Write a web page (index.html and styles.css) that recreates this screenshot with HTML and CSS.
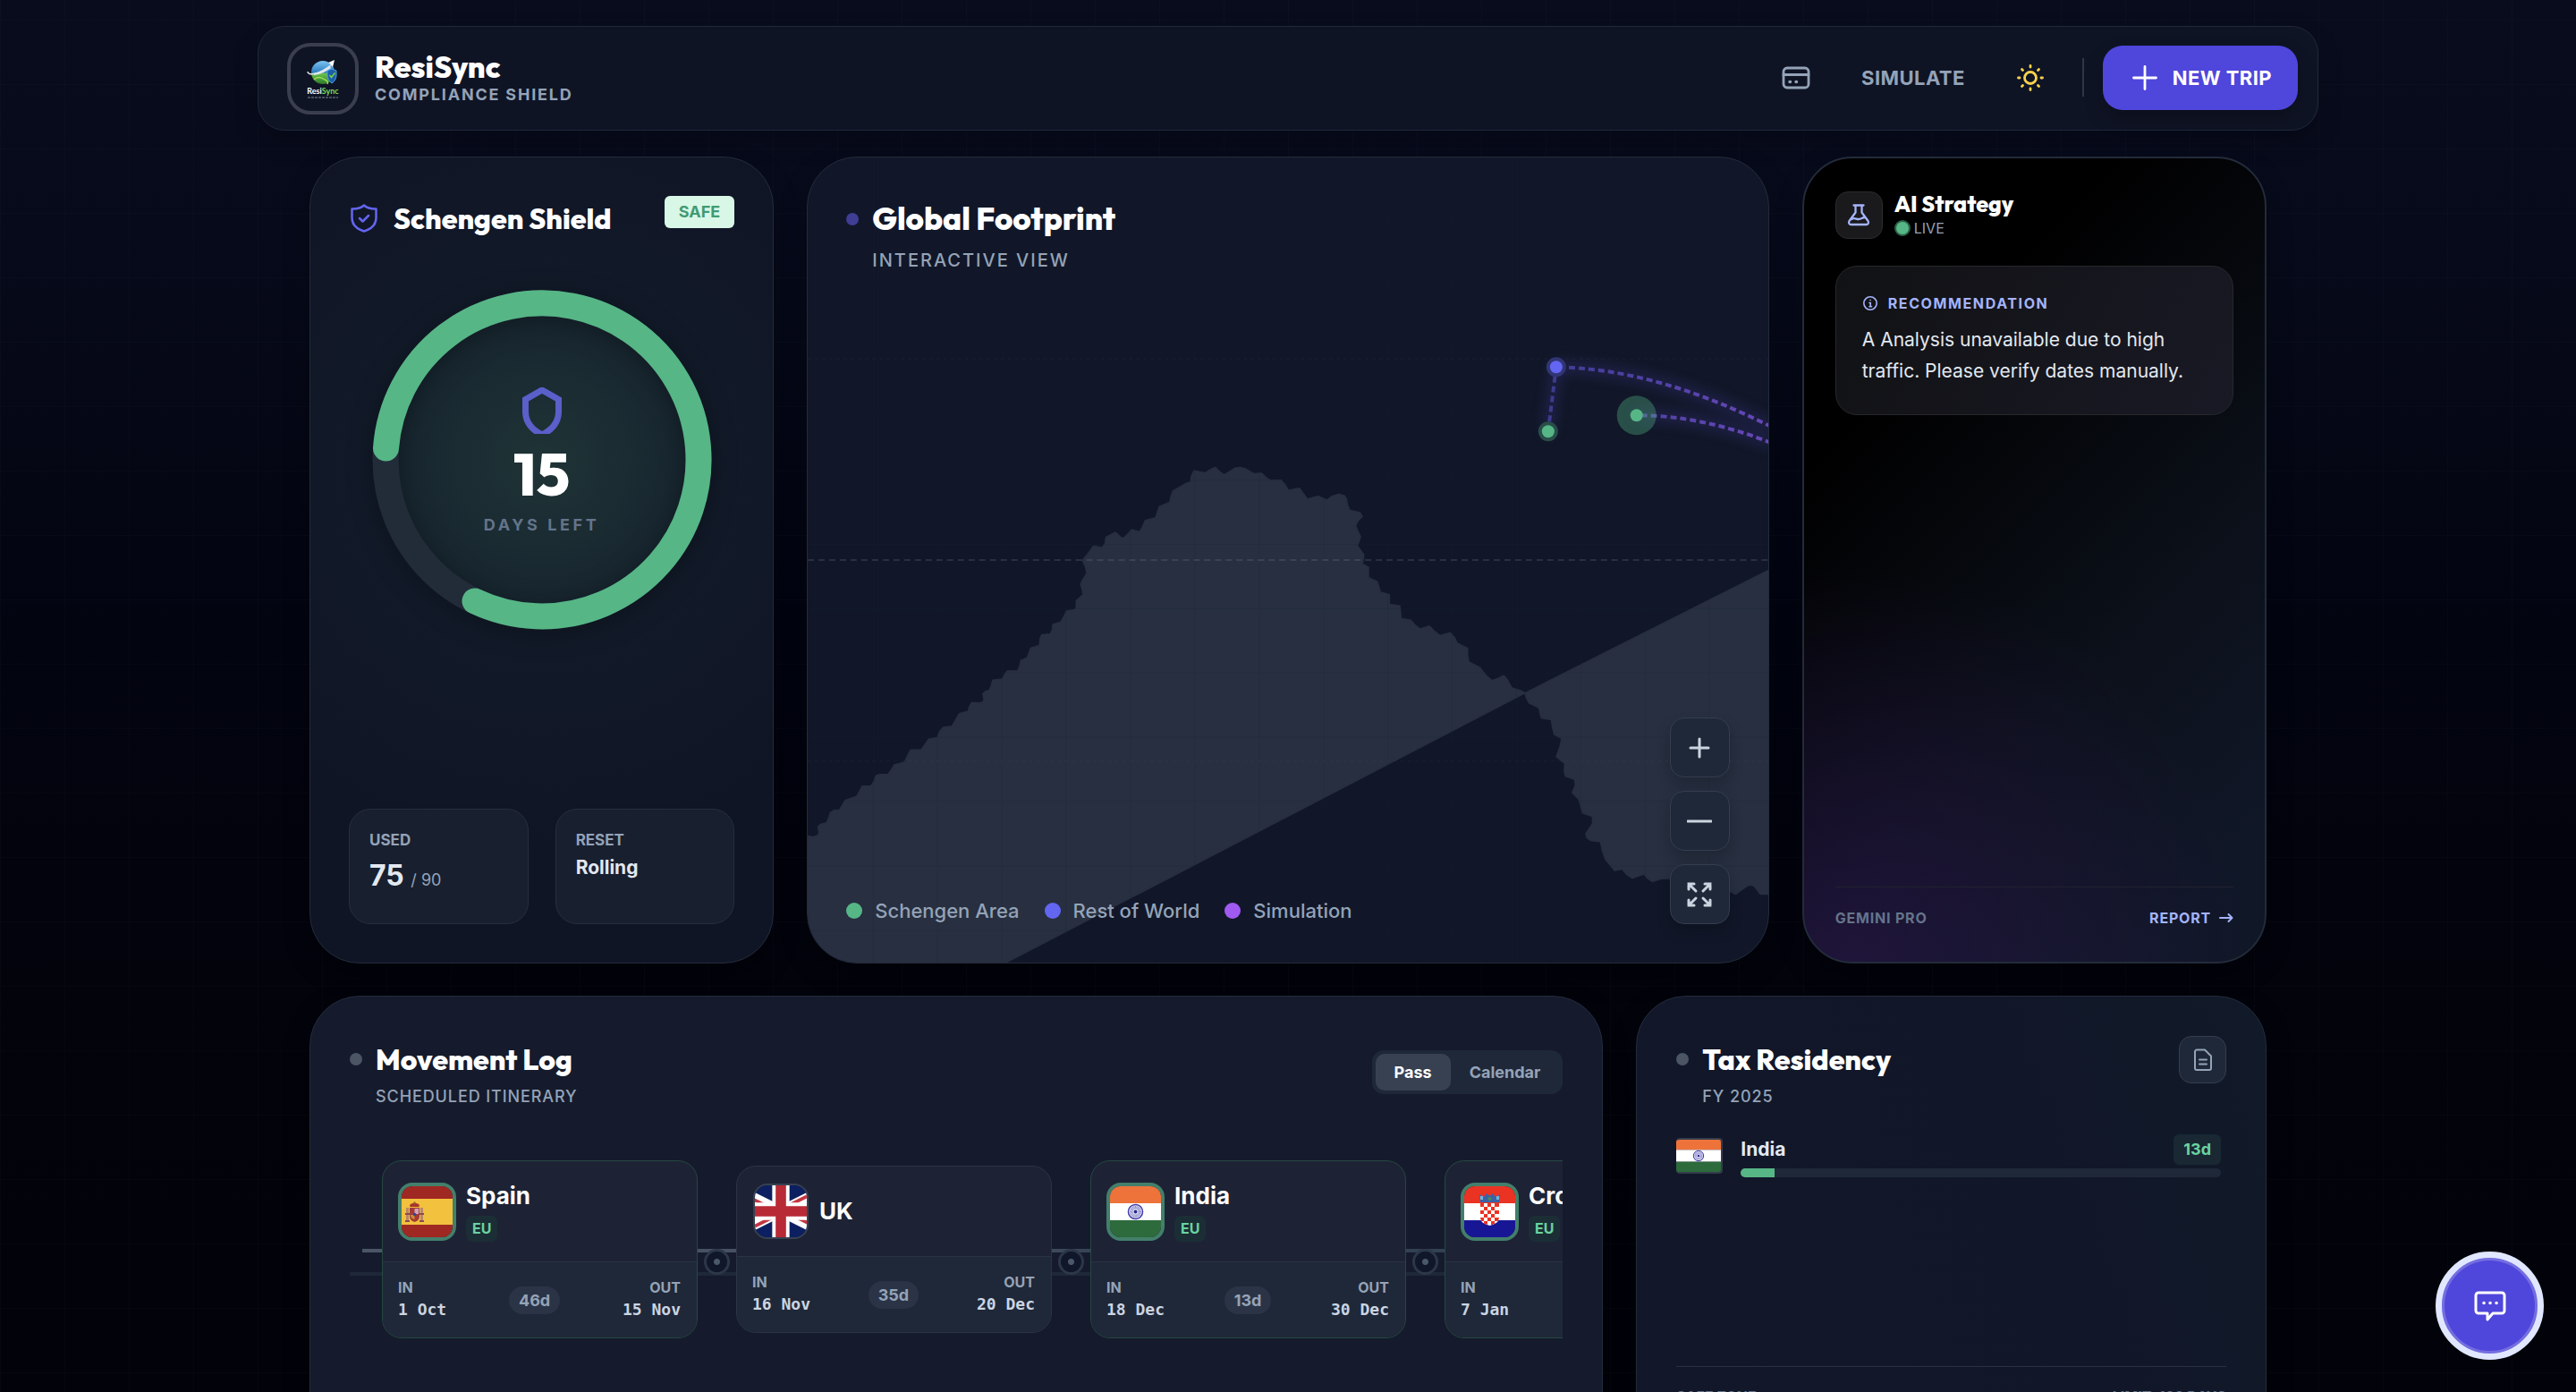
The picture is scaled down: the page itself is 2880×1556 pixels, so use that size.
FILE: index.html
```html
<!DOCTYPE html>
<html lang="en">
<head>
<meta charset="utf-8">
<meta name="viewport" content="width=device-width, initial-scale=1">
<title>ResiSync – Compliance Shield</title>
<link rel="stylesheet" href="styles.css">
</head>
<body>
<svg class="defs" aria-hidden="true">
  <symbol id="flag-india" viewBox="0 0 60 48" preserveAspectRatio="xMidYMid slice">
    <rect width="60" height="16" fill="#ee733b"/><rect y="16" width="60" height="16" fill="#fff"/><rect y="32" width="60" height="16" fill="#2d6a3c"/>
    <circle cx="30" cy="24" r="6.8" fill="#e4e4f2" stroke="#3d3aa8" stroke-width="1.2"/>
    <circle cx="30" cy="24" r="4" fill="none" stroke="#8886cc" stroke-width="3" stroke-dasharray=".7 .5"/><circle cx="30" cy="24" r="1.6" fill="#2a2890"/>
  </symbol>
  <symbol id="flag-spain" viewBox="0 0 57 57">
    <rect width="57" height="57" fill="#9f2823"/><rect y="14" width="57" height="29" fill="#f2c13e"/>
    <path d="M5 24h3v16H5zM21 24h3v16h-3z" fill="#b9876a"/><path d="M4 30h5v2H4zM20 30h5v2h-5zM4 38h5v2H4zM20 38h5v2h-5z" fill="#8c4b52"/>
    <path d="M9 24h11v9c0 4-2 6-5.500 7C11 39 9 37 9 33z" fill="#a53a35"/><path d="M14.500 25H19v6h-4.500z" fill="#cfa3b8"/><path d="M10 32h4.500v5c-3-.5-4.500-2-4.500-5z" fill="#c98a35"/><circle cx="14.500" cy="31.500" r="1.800" fill="#34478f"/>
    <path d="M9.500 23c-1-3 1-4 5-4s6 1 5 4z" fill="#a7352c"/><circle cx="14.500" cy="18.500" r="1.200" fill="#9a6a2c"/>
  </symbol>
  <symbol id="flag-uk" viewBox="0 0 60 30" preserveAspectRatio="xMidYMid slice">
    <clipPath id="uk-tri"><path d="M30 15h30v15zv15H0zH0V0zV0h30z"/></clipPath>
    <rect width="60" height="30" fill="#0c1f60"/><path d="M0 0l60 30M60 0L0 30" stroke="#fff" stroke-width="6"/>
    <path d="M0 0l60 30M60 0L0 30" clip-path="url(#uk-tri)" stroke="#c43540" stroke-width="4"/>
    <path d="M30 0v30M0 15h60" stroke="#fff" stroke-width="10"/><path d="M30 0v30M0 15h60" stroke="#b82a35" stroke-width="6"/>
  </symbol>
  <symbol id="flag-croatia" viewBox="0 0 57 57">
    <rect width="57" height="19" fill="#ea3323"/><rect y="19" width="57" height="19" fill="#fff"/><rect y="38" width="57" height="19" fill="#171796"/>
    <path d="M18 19h21v16c0 5-4 7-10.500 9C22 42 18 40 18 35z" fill="#fff"/>
    <path d="M18 19h4v4h-4zM26 19h4v4h-4zM34 19h5v4h-5zM22 23h4v4h-4zM30 23h4v4h-4zM18 27h4v4h-4zM26 27h4v4h-4zM34 27h5v4h-5zM22 31h4v4h-4zM30 31h4v4h-4zM18 35h4v4h-3zM26 35h4v4h-4zM34 35h5l-1 4h-4zM22 39h4v4l-4-1.500zM30 39h4v3l-4 1.500z" fill="#ea3323"/>
    <path d="M17 9l5 3 3-4 3.500 3L32 8l3 4 5-3-1 9H18z" fill="#3a62a8"/><path d="M18 11h3v4h-3zM36 11h3v4h-3z" fill="#6fb7dd"/><circle cx="28.500" cy="14" r="2" fill="#4a8a5a"/>
  </symbol>
  <linearGradient id="route-grad" gradientUnits="userSpaceOnUse" x1="820" y1="0" x2="1075" y2="0"><stop offset="0" stop-color="#3d3c93"/><stop offset="1" stop-color="#6747b8"/></linearGradient>
  <linearGradient id="globe" x1="0" y1="0" x2="0" y2="1"><stop offset="0" stop-color="#7cc4f2"/><stop offset=".5" stop-color="#2f7fc0"/><stop offset=".55" stop-color="#6cc24a"/><stop offset="1" stop-color="#2c7a2c"/></linearGradient>
</svg>

<header class="topbar">
  <a class="brand" href="#">
    <span class="brand-mark">
      <svg width="40" height="46" viewBox="0 0 40 46" aria-hidden="true">
        <circle cx="20" cy="16" r="13" fill="url(#globe)"/>
        <path d="M9 17c6-1 14-4 19-8l1 2c-5 4-12 7-19 8z" fill="#dfe9f2"/>
        <path d="M3 15c0 5 12 4 27-8" fill="none" stroke="#dfe6ee" stroke-width="1.500"/><path d="M26 5l7-3-2 8-2-3z" fill="#fff"/>
        <path d="M10 24c4-4 9-2 12 0 3 1 4 3 3 5" fill="none" stroke="#9be05c" stroke-width="1.500"/>
        <path d="M25 14l5-2 5 2v5c0 4-2 7-5 9-3-2-5-5-5-9z" fill="#1d5ea8" stroke="#4ba3e8" stroke-width="1"/><path d="M27.500 19l2 2.500 4-5" fill="none" stroke="#7ad04c" stroke-width="1.500"/>
        <text x="20" y="40" text-anchor="middle" font-family="Lato, sans-serif" font-weight="700" font-size="9" fill="#fff">Resi<tspan fill="#7ed957">Sync</tspan></text>
        <path d="M3 44h34" stroke="#7f8796" stroke-width="1" stroke-dasharray="3 1"/>
      </svg>
    </span>
    <span class="brand-text"><strong class="brand-name">ResiSync</strong><span class="brand-sub">COMPLIANCE SHIELD</span></span>
  </a>
  <nav class="nav">
    <button class="icon-btn" aria-label="Cards"><svg width="32" height="32" viewBox="0 0 32 32" fill="none" stroke="currentColor" stroke-width="2.800" stroke-linecap="round"><rect x="2" y="5" width="28" height="22" rx="4"/><path d="M2 12.500h28"/><path d="M9 20.500h.5M16 20.500h.5" stroke-width="3.500"/></svg></button>
    <button class="text-btn">SIMULATE</button>
    <button class="icon-btn sun" aria-label="Toggle theme"><svg width="32" height="32" viewBox="0 0 32 32" fill="none" stroke="currentColor" stroke-width="2.800" stroke-linecap="round"><circle cx="16" cy="16" r="6.500"/><path d="M16 2.500v1.500M16 28v1.500M2.500 16h1.500M28 16h1.500M6.500 6.500l1 1M24.500 24.500l1 1M6.500 25.500l1-1M24.500 7.500l1-1"/></svg></button>
    <span class="nav-rule"></span>
    <button class="primary-btn"><svg width="28" height="28" viewBox="0 0 28 28" fill="none" stroke="currentColor" stroke-width="2.800" stroke-linecap="round"><path d="M14 1.500v25M1.500 14h25"/></svg>NEW TRIP</button>
  </nav>
</header>

<main class="board">
  <section class="card shield-card">
    <div class="shield-head">
      <svg width="34" height="34" viewBox="0 0 34 34" fill="none" stroke="#6366f1" stroke-width="2.500" stroke-linecap="round" stroke-linejoin="round"><path d="M17 2.500c3.500 3 8 4.200 13.500 4v10c0 7.500-5.500 12.500-13.500 15-8-2.500-13.500-7.500-13.500-15v-10c5.500.2 10-1 13.500-4z"/><path d="M12 17l3.500 3.500L22 14"/></svg>
      <h2 class="title">Schengen Shield</h2>
      <span class="badge-safe">SAFE</span>
    </div>
    <div class="ring">
      <svg class="ring-svg" viewBox="0 0 380 380" fill="none" stroke-width="29"><circle cx="190" cy="190" r="175" stroke="#222c39"/><path d="M15.500 177A175 175 0 1 1 115 348" stroke="#56b686" stroke-linecap="round"/></svg>
      <div class="ring-body">
        <svg width="44" height="52" viewBox="0 0 44 52" fill="none" stroke="#5a5fc9" stroke-width="7"><path d="M22 3L40.500 13.500V27C40.500 40 32 48 22 53 12 48 3.500 40 3.500 27V13.500z"/></svg>
        <strong class="ring-num">15</strong>
        <span class="ring-label">DAYS LEFT</span>
      </div>
    </div>
    <dl class="stats">
      <div class="stat"><dt>USED</dt><dd class="stat-big">75 <small>/ 90</small></dd></div>
      <div class="stat"><dt>RESET</dt><dd>Rolling</dd></div>
    </dl>
  </section>

  <section class="card map-card">
    <svg class="map" viewBox="-1 -1 1075 902" preserveAspectRatio="xMidYMid slice" aria-hidden="true">
      <g transform="translate(-3 324) scale(.6888 .3827)" fill="#272f40" stroke="#272f40" stroke-width="3" stroke-linejoin="round">
        <path d="M0 1135L12 1139 20 1134 22 1125 20 1110 24 1102 34 1097 38 1082 40 1068 46 1061 55 1060 60 1045 64 1032 83 1020 88 1004 92 990 106 990 112 974 114 960 120 956 134 956 140 940 144 928 161 920 166 900 171 884 188 884 194 868 200 853 214 848 218 830 224 818 238 815 244 796 250 778 264 771 266 758 270 746 286 747 290 738 288 720 292 713 299 709 302 694 304 680 320 677 324 662 328 653 345 653 348 638 350 622 360 615 363 600 366 586 380 578 381 560 384 547 398 545 401 533 402 517 415 510 420 494 424 478 438 474 440 465 440 448 451 430 450 418 447 400 450 388 457 368 455 350 450 330 458 312 468 288 482 293 487 280 488 262 503 248 510 260 516 266 523 254 530 240 543 247 548 230 552 213 569 205 572 188 575 172 592 160 594 142 597 127 618 105 626 100 627 84 631 68 650 74 656 66 665 58 672 70 680 80 690 69 698 60 705 58 713 61 727 76 740 75 748 88 755 96 772 95 778 108 784 125 802 119 808 134 815 151 832 142 847 154 856 142 866 136 875 141 878 150 880 168 883 183 900 190 904 202 897 215 893 228 896 242 901 260 899 274 896 287 906 312 906 325 904 340 914 350 914 365 914 380 928 392 931 408 933 422 948 430 948 445 948 458 965 463 966 480 967 500 983 505 990 520 998 531 1013 522 1022 538 1030 550 1047 542 1054 556 1058 572 1075 587 1075 605 1077 627 1095 643 1105 666 1115 682 1125 675 1134 667 1140 680 1147 703 1160 710 1169 718L322 1510H-3V1135z"/>
        <path d="M1169 718L1172 735 1176 748 1192 762 1194 780 1196 792 1212 797 1214 820 1217 840 1229 852 1226 875 1220 905 1234 925 1233 945 1235 962 1250 972 1251 988 1246 1010 1257 1030 1260 1050 1263 1070 1279 1080 1279 1100 1268 1130 1270 1142 1276 1150 1292 1154 1295 1180 1300 1205 1315 1238 1327 1233 1335 1250 1343 1260 1363 1248 1368 1260 1376 1270 1390 1262 1403 1261H1480L1501 1297 1511 1307 1524 1290 1530 1282 1536 1280 1542 1284 1552 1307H1570V354z"/>
      </g>
      <g stroke="#1d2536" stroke-opacity=".18"><path d="M72.500 0v902M144.500 0v902M216.500 0v902M288.500 0v902M360.500 0v902M432.500 0v902M504.500 0v902M576.500 0v902M648.500 0v902M720.500 0v902M792.500 0v902M864.500 0v902M936.500 0v902M1008.500 0v902M0 72.500h1075M0 144.500h1075M0 216.500h1075M0 288.500h1075M0 360.500h1075M0 432.500h1075M0 504.500h1075M0 576.500h1075M0 648.500h1075M0 720.500h1075M0 792.500h1075M0 864.500h1075"/></g>
      <path d="M-1 450h1076" stroke="#94a3b8" stroke-opacity=".18" stroke-width="2" stroke-dasharray="7 5"/>
      <path d="M-1 225h1076M-1 675h1076" stroke="#94a3b8" stroke-opacity=".04" stroke-width="2" stroke-dasharray="4 4"/>
      <g class="routes" fill="none" stroke="url(#route-grad)" stroke-width="4" stroke-dasharray="7 4"><path d="M1078 301Q950 236 837 234"/><path d="M1078 319Q1000 288 927 288"/><path d="M828 306L837 234" stroke="#3c3b8c"/></g>
      <circle cx="837" cy="234" r="11" fill="#313573"/><circle cx="837" cy="234" r="7" fill="#6366f1"/>
      <circle cx="828" cy="306" r="11" fill="#294d48"/><circle cx="828" cy="306" r="7" fill="#56b686"/>
      <circle cx="927" cy="288" r="22" fill="#56b686" fill-opacity=".35"/><circle cx="927" cy="288" r="7" fill="#56b686"/>
    </svg>
    <div class="heading map-heading">
      <span class="dot dot-indigo"></span>
      <div><h2 class="title">Global Footprint</h2><p class="subtitle">INTERACTIVE VIEW</p></div>
    </div>
    <div class="map-foot">
      <ul class="legend"><li class="l-green">Schengen Area</li><li class="l-indigo">Rest of World</li><li class="l-purple">Simulation</li></ul>
      <div class="zoom">
        <button aria-label="Zoom in"><svg width="28" height="28" viewBox="0 0 28 28"><path d="M14 4v20M4 14h20"/></svg></button>
        <button aria-label="Zoom out"><svg width="28" height="28" viewBox="0 0 28 28"><path d="M1 14h26"/></svg></button>
        <button aria-label="Fit map"><svg width="30" height="30" viewBox="0 0 30 30"><path d="M3 9V3h6M3 3l8 8M21 3h6v6M27 3l-8 8M3 21v6h6M3 27l8-8M21 27h6v-6M27 27l-8-8"/></svg></button>
      </div>
    </div>
  </section>

  <section class="card ai-card">
    <div class="ai-head">
      <span class="ai-icon"><svg width="28" height="28" viewBox="0 0 28 28" fill="none" stroke="#a5b4fc" stroke-width="2.300" stroke-linecap="round" stroke-linejoin="round"><path d="M8.500 3.500h11M10.500 3.500v8L3.500 21c-1.200 2 0 4 2 4h17c2 0 3.200-2 2-4l-7-9.500v-8"/><path d="M6 19c3-2 5 0 8 0s4-2 7-2"/></svg></span>
      <div><h2 class="ai-title">AI Strategy</h2><p class="live">LIVE</p></div>
    </div>
    <div class="rec">
      <h3><svg width="18" height="18" viewBox="0 0 18 18" fill="none" stroke="currentColor" stroke-width="1.600" stroke-linecap="round"><circle cx="9" cy="9" r="7.200"/><path d="M8 8.500h1.200v4M8 12.700h2.500M9 5.500h.1"/></svg>RECOMMENDATION</h3>
      <p>A Analysis unavailable due to high traffic. Please verify dates manually.</p>
    </div>
    <div class="ai-foot"><span>GEMINI PRO</span><a href="#">REPORT <svg width="16" height="12" viewBox="0 0 16 12" fill="none" stroke="currentColor" stroke-width="2" stroke-linecap="round" stroke-linejoin="round"><path d="M1 6h13.500M10.500 2l4 4-4 4"/></svg></a></div>
  </section>

  <section class="card log-card">
    <div class="heading">
      <span class="dot"></span>
      <div><h2 class="title">Movement Log</h2><p class="subtitle">SCHEDULED ITINERARY</p></div>
      <div class="toggle"><button class="on">Pass</button><button>Calendar</button></div>
    </div>
    <ol class="timeline">
      <li><article class="trip eu"><div class="trip-top"><svg class="flag"><use href="#flag-spain"/></svg><div><h3>Spain</h3><span class="eu-tag">EU</span></div></div><div class="trip-dates"><p><span>IN</span><time>1 Oct</time></p><b>46d</b><p><span>OUT</span><time>15 Nov</time></p></div></article><i class="node"></i></li>
      <li><article class="trip"><div class="trip-top"><svg class="flag"><use href="#flag-uk"/></svg><div><h3>UK</h3></div></div><div class="trip-dates"><p><span>IN</span><time>16 Nov</time></p><b>35d</b><p><span>OUT</span><time>20 Dec</time></p></div></article><i class="node"></i></li>
      <li><article class="trip eu"><div class="trip-top"><svg class="flag"><use href="#flag-india"/></svg><div><h3>India</h3><span class="eu-tag">EU</span></div></div><div class="trip-dates"><p><span>IN</span><time>18 Dec</time></p><b>13d</b><p><span>OUT</span><time>30 Dec</time></p></div></article><i class="node"></i></li>
      <li><article class="trip eu"><div class="trip-top"><svg class="flag"><use href="#flag-croatia"/></svg><div><h3>Croatia</h3><span class="eu-tag">EU</span></div></div><div class="trip-dates"><p><span>IN</span><time>7 Jan</time></p></div></article></li>
    </ol>
  </section>

  <section class="card tax-card">
    <div class="heading">
      <span class="dot"></span>
      <div><h2 class="title">Tax Residency</h2><p class="subtitle">FY 2025</p></div>
      <button class="doc-btn" aria-label="Tax report"><svg width="26" height="26" viewBox="0 0 26 26" fill="none" stroke="currentColor" stroke-width="2" stroke-linecap="round" stroke-linejoin="round"><path d="M6 1.500h9l7 7V22a2 2 0 0 1-2 2H6a2 2 0 0 1-2-2V3.500a2 2 0 0 1 2-2zM9 12.500h8M9 17.500h8"/></svg></button>
    </div>
    <ul class="tax-list">
      <li><svg class="tax-flag"><use href="#flag-india"/></svg><div class="tax-row"><div class="tax-line"><span>India</span><b>13d</b></div><div class="bar"><span style="width:7.1%"></span></div></div></li>
    </ul>
    <div class="tax-foot"><span>SAFE ZONE</span><span>LIMIT: 183 DAYS</span></div>
  </section>
</main>

<button class="chat" aria-label="Open chat"><svg width="38" height="38" viewBox="0 0 38 38" fill="none" stroke="#fff" stroke-width="3" stroke-linejoin="round" stroke-linecap="round"><path d="M6 4h26a3 3 0 0 1 3 3v17a3 3 0 0 1-3 3H22l-6 7v-7H6a3 3 0 0 1-3-3V7a3 3 0 0 1 3-3z"/><path d="M12 15.500h.1M19 15.500h.1M26 15.500h.1" stroke-width="3.500"/></svg></button>
</body>
</html>
```
FILE: styles.css
```css
* { box-sizing: border-box; margin: 0; padding: 0; }
html { scrollbar-width: none; background: #020309; }
body {
  min-height: 100vh;
  padding: 29px 32px 60px;
  font-family: Inter, "Liberation Sans", sans-serif;
  font-size: 18px;
  color: #fff;
  background:
    repeating-linear-gradient(90deg, rgba(255,255,255,.014) 0 1px, transparent 1px 72px),
    repeating-linear-gradient(0deg, rgba(255,255,255,.014) 0 1px, transparent 1px 72px),
    linear-gradient(#090c1d 0, #070a1a 260px, #020410 700px, #02030b 1100px, #020309 100%);
}
button { font: inherit; color: inherit; border: 0; background: none; cursor: pointer; }
a { color: inherit; text-decoration: none; }
ul, ol { list-style: none; }
svg { display: block; flex: none; }
.defs { position: absolute; width: 0; height: 0; }

.topbar {
  display: flex; align-items: center; justify-content: space-between;
  max-width: 2304px; min-height: 117px; margin: 0 auto 29px; padding: 0 22px 0 32px;
  border: 1px solid #20273a; border-radius: 30px;
  background: #0f1425; box-shadow: 0 12px 28px rgba(0,0,0,.2);
}
.brand { display: flex; align-items: center; gap: 18px; }
.brand-mark { display: grid; place-items: center; width: 80px; height: 80px; border: 4px solid #3a3e4e; border-radius: 26px; }
.brand-text { display: flex; flex-direction: column; padding-bottom: 4px; }
.brand-name, .title, .ai-title, .ring-num { font-family: Outfit, Lato, sans-serif; font-weight: 800; }
.brand-name { font-size: 34px; line-height: 40px; }
.brand-sub { font-size: 18px; line-height: 22px; font-weight: 700; letter-spacing: .1em; color: #94a3b8; }
.nav { display: flex; align-items: center; padding-bottom: 2px; }
.icon-btn { display: grid; place-items: center; width: 72px; height: 72px; color: #94a3b8; }
.sun { color: #fcd34d; margin-right: 22px; }
.text-btn { padding: 0 37px; font-size: 22px; font-weight: 700; letter-spacing: .02em; color: #94a3b8; line-height: 40px; }
.nav-rule { width: 2px; height: 43px; margin-right: 21px; background: #2d3748; }
.primary-btn {
  display: flex; align-items: center; gap: 17px; height: 72px; padding: 0 29px 0 33px;
  font-size: 22px; font-weight: 700; letter-spacing: .02em; border-radius: 22px; background: #4f46dc; box-shadow: 0 10px 20px rgba(0,0,0,.25);
}

.board { display: grid; grid-template-columns: repeat(12, minmax(0, 1fr)); gap: 36px 37px; max-width: 2188px; margin: 0 auto; }
.card { position: relative; display: flex; flex-direction: column; border: 1px solid #232b3b; border-radius: 56px; overflow: hidden; box-shadow: 0 12px 30px rgba(0,0,0,.25); }
.shield-card, .map-card, .ai-card { min-height: 902px; }
.title { font-size: 32px; line-height: 52px; white-space: nowrap; }
.subtitle { margin-top: 4px; font-size: 18px; line-height: 24px; font-weight: 500; letter-spacing: .05em; color: #94a3b8; }
.heading { display: flex; }
.dot { flex: none; width: 14px; height: 14px; margin: 19px 15px 0 0; border-radius: 50%; background: #4b5563; }
.dot-indigo { background: #3f3d94; }

.shield-card { grid-column: span 3; padding: 43px; background: radial-gradient(circle 420px at 50% 350px, #142029, #111828 60%, #101525); }
.shield-head { display: flex; gap: 16px; height: 50px; align-items: center; }
.badge-safe { align-self: flex-start; margin-left: auto; padding: 0 16px; font-weight: 700; line-height: 36px; border-radius: 6px; color: #429a72; background: #d9f7e6; }
.ring { display: grid; place-items: center; margin: 55px auto 0; width: 380px; height: 380px; border-radius: 50%; background: radial-gradient(circle, #1f3436, #17252f 62%, transparent 70%); }
.ring-svg { grid-area: 1 / 1; width: 380px; height: 380px; filter: drop-shadow(0 4px 14px rgba(0,0,0,.3)); }
.ring-body { grid-area: 1 / 1; position: relative; display: flex; flex-direction: column; align-items: center; padding-top: 4px; }
.ring-num { margin-top: 11px; font-size: 66px; line-height: 68px; }
.ring-label { margin-top: 11px; font-size: 18px; font-weight: 700; line-height: 24px; letter-spacing: .2em; color: #64748b; }
.stats { display: grid; grid-template-columns: 1fr 1fr; gap: 30px; margin-top: auto; }
.stat { min-height: 129px; padding: 22px; border: 1px solid #262e3d; border-radius: 24px; background: #181f2f; }
.stat dt { font-size: 17px; font-weight: 700; line-height: 24px; color: #94a3b8; }
.stat dd { margin-top: 4px; font-size: 21px; font-weight: 700; line-height: 30px; color: #e2e8f0; }
.stat .stat-big { font-size: 32px; line-height: 48px; }
.stat small { font-size: 18px; font-weight: 400; color: #94a3b8; }

.map-card { grid-column: span 6; padding: 43px; background: #111728; justify-content: space-between; }
.map { position: absolute; inset: 0; width: 100%; height: 100%; }
.routes { filter: drop-shadow(0 0 8px #5b4bd0); }
.map-heading, .map-foot { position: relative; }
.map-heading .title { font-size: 35px; line-height: 50px; }
.map-heading .subtitle { margin-top: 10px; font-size: 20px; letter-spacing: .1em; }
.map-foot { display: flex; justify-content: space-between; align-items: flex-end; }
.legend { display: flex; gap: 28px; color: #94a3b8; font-size: 22px; font-weight: 500; line-height: 30px; }
.legend li { display: flex; align-items: center; gap: 14px; }
.legend li::before { content: ""; width: 18px; height: 18px; border-radius: 50%; background: currentColor; }
.l-green::before { color: #56b686; }
.l-indigo::before { color: #6366f1; }
.l-purple::before { color: #a05af0; }
.zoom { display: grid; gap: 15px; }
.zoom button { display: grid; place-items: center; width: 67px; height: 67px; border: 1px solid #343e4f; border-radius: 16px; background: #1f2838; box-shadow: 0 8px 16px rgba(0,0,0,.2); }
.zoom svg { fill: none; stroke: #cbd5e1; stroke-width: 3; stroke-linecap: round; }

.ai-card { grid-column: span 3; padding: 36px 35px 36px; border-width: 2px; background: radial-gradient(circle 440px at 10% 100%, rgba(50,24,88,.5), transparent), linear-gradient(135deg, #000 25%, #0b1019 62%, #101727 90%); }
.ai-head { display: flex; gap: 13px; align-items: center; }
.ai-icon { display: grid; place-items: center; width: 53px; height: 53px; border: 1px solid #2c2c30; border-radius: 14px; background: #1a1a1c; }
.ai-title { font-size: 25px; line-height: 30px; }
.live { display: flex; align-items: center; gap: 4px; font-size: 16px; line-height: 24px; color: #94a3b8; }
.live::before { content: ""; width: 14px; height: 14px; border: 2px solid #2b6248; border-radius: 50%; background: #56b686; }
.rec { margin-top: 30px; padding: 29px 29px 31px; border: 1px solid #26282c; border-radius: 24px; background: linear-gradient(120deg, #111214, #191925); }
.rec h3 { display: flex; gap: 11px; align-items: center; font-size: 16px; line-height: 24px; font-weight: 700; letter-spacing: .1em; color: #a5b4fc; }
.rec p { margin-top: 11px; font-size: 21px; line-height: 35px; font-weight: 400; color: #e2e8f0; }
.ai-foot { display: flex; justify-content: space-between; margin-top: auto; padding-top: 21px; border-top: 1px solid #20222f; font-size: 16px; line-height: 26px; font-weight: 700; letter-spacing: .05em; color: #64748b; }
.ai-foot a { display: flex; align-items: center; gap: 9px; color: #a5b4fc; }

.log-card { grid-column: span 8; padding: 44px; background: #151b2c; min-height: 500px; }
.toggle { display: flex; height: 49px; margin: 16px 0 0 auto; padding: 4px; border-radius: 13px; background: #1f2838; }
.toggle button { padding: 0 21px; border-radius: 10px; font-size: 18px; font-weight: 700; color: #94a3b8; }
.toggle .on { color: #fff; background: #374151; }
.timeline { position: relative; display: flex; align-items: center; margin-top: 59px; padding-left: 36px; overflow: hidden; }
.timeline::before { content: ""; position: absolute; left: 14px; right: 0; top: 99px; height: 4px; background: linear-gradient(90deg, #4b5568, #434e60 55%, #334155 62%); }
.timeline::after { content: ""; position: absolute; left: 0; right: 0; top: 125px; height: 4px; background: #1f2838; }
.timeline li { position: relative; z-index: 1; display: flex; align-items: center; flex: none; }
.node { flex: none; width: 29px; height: 29px; margin: 28px 7px 0; border: 3px solid #2c3749; border-radius: 50%; background: radial-gradient(circle, #4b5869 0 3px, #10172a 4px); }
.trip { width: 353px; border: 1px solid #2b3446; border-radius: 22px; background: #1d2335; overflow: hidden; }
.trip.eu { border-color: #254841; }
.trip-top { display: flex; align-items: center; gap: 12px; height: 101px; padding: 0 18px; border-bottom: 1px solid #2a3243; }
.trip.eu .trip-top { gap: 11px; height: 113px; padding: 0 17px; }
.flag { width: 62px; height: 62px; border: 2px solid #374151; border-radius: 16px; overflow: hidden; }
.eu .flag { width: 65px; height: 65px; border: 4px solid #437f6b; }
.trip h3 { font-size: 26px; line-height: 34px; font-weight: 700; }
.eu-tag { display: inline-block; margin-top: 5px; padding: 0 7px; font-size: 16px; line-height: 29px; font-weight: 700; border-radius: 7px; color: #6ad3a0; background: #1b2e35; vertical-align: top; }
.trip-dates { display: flex; align-items: center; justify-content: space-between; height: 84px; padding: 0 18px 0 17px; background: #1f2838; }
.trip-dates p { display: flex; flex-direction: column; }
.trip-dates p:last-child:not(:first-child) { text-align: right; }
.trip-dates span { font-size: 16px; line-height: 22px; font-weight: 700; color: #94a3b8; }
.trip-dates time { font-family: "DejaVu Sans Mono", monospace; font-size: 18px; line-height: 28px; font-weight: 700; color: #cbd5e1; }
.trip-dates b { padding: 0 11px; font-size: 18px; font-weight: 700; line-height: 31px; border-radius: 16px; color: #94a3b8; background: #2b3446; }

.tax-card { grid-column: span 4; padding: 44px; background: linear-gradient(250deg, #111a29, #111728 35%, #121829); }
.doc-btn { display: grid; place-items: center; width: 53px; height: 53px; margin-left: auto; border: 1px solid #343e4f; border-radius: 14px; color: #94a3b8; background: #1f2838; }
.tax-list { min-height: 259px; margin-top: 30px; padding-right: 6px; }
.tax-list li { display: flex; align-items: center; gap: 20px; }
.tax-flag { width: 52px; height: 40px; border: 2px solid #333c4c; border-left: 0; border-radius: 4px; }
.tax-row { flex: 1; }
.tax-line { display: flex; justify-content: space-between; font-size: 21px; line-height: 34px; font-weight: 700; color: #e2e8f0; }
.tax-line b { padding: 0 11px; font-size: 18px; font-weight: 700; border-radius: 6px; color: #6ad3a0; background: #192833; }
.bar { height: 10px; margin-top: 4px; border-radius: 5px; overflow: hidden; background: #1f2838; }
.bar span { display: block; height: 100%; background: #56b686; }
.tax-foot { display: flex; justify-content: space-between; padding-top: 20px; border-top: 1px solid #2a3141; font-size: 16px; line-height: 26px; font-weight: 700; color: #64748b; }

.chat { position: fixed; right: 36px; bottom: 36px; display: grid; place-items: center; width: 121px; height: 121px; border: 7px solid #e0e7ff; border-radius: 50%; background: #4f46dc; box-shadow: inset 0 0 0 3px #746ee0; }
```
